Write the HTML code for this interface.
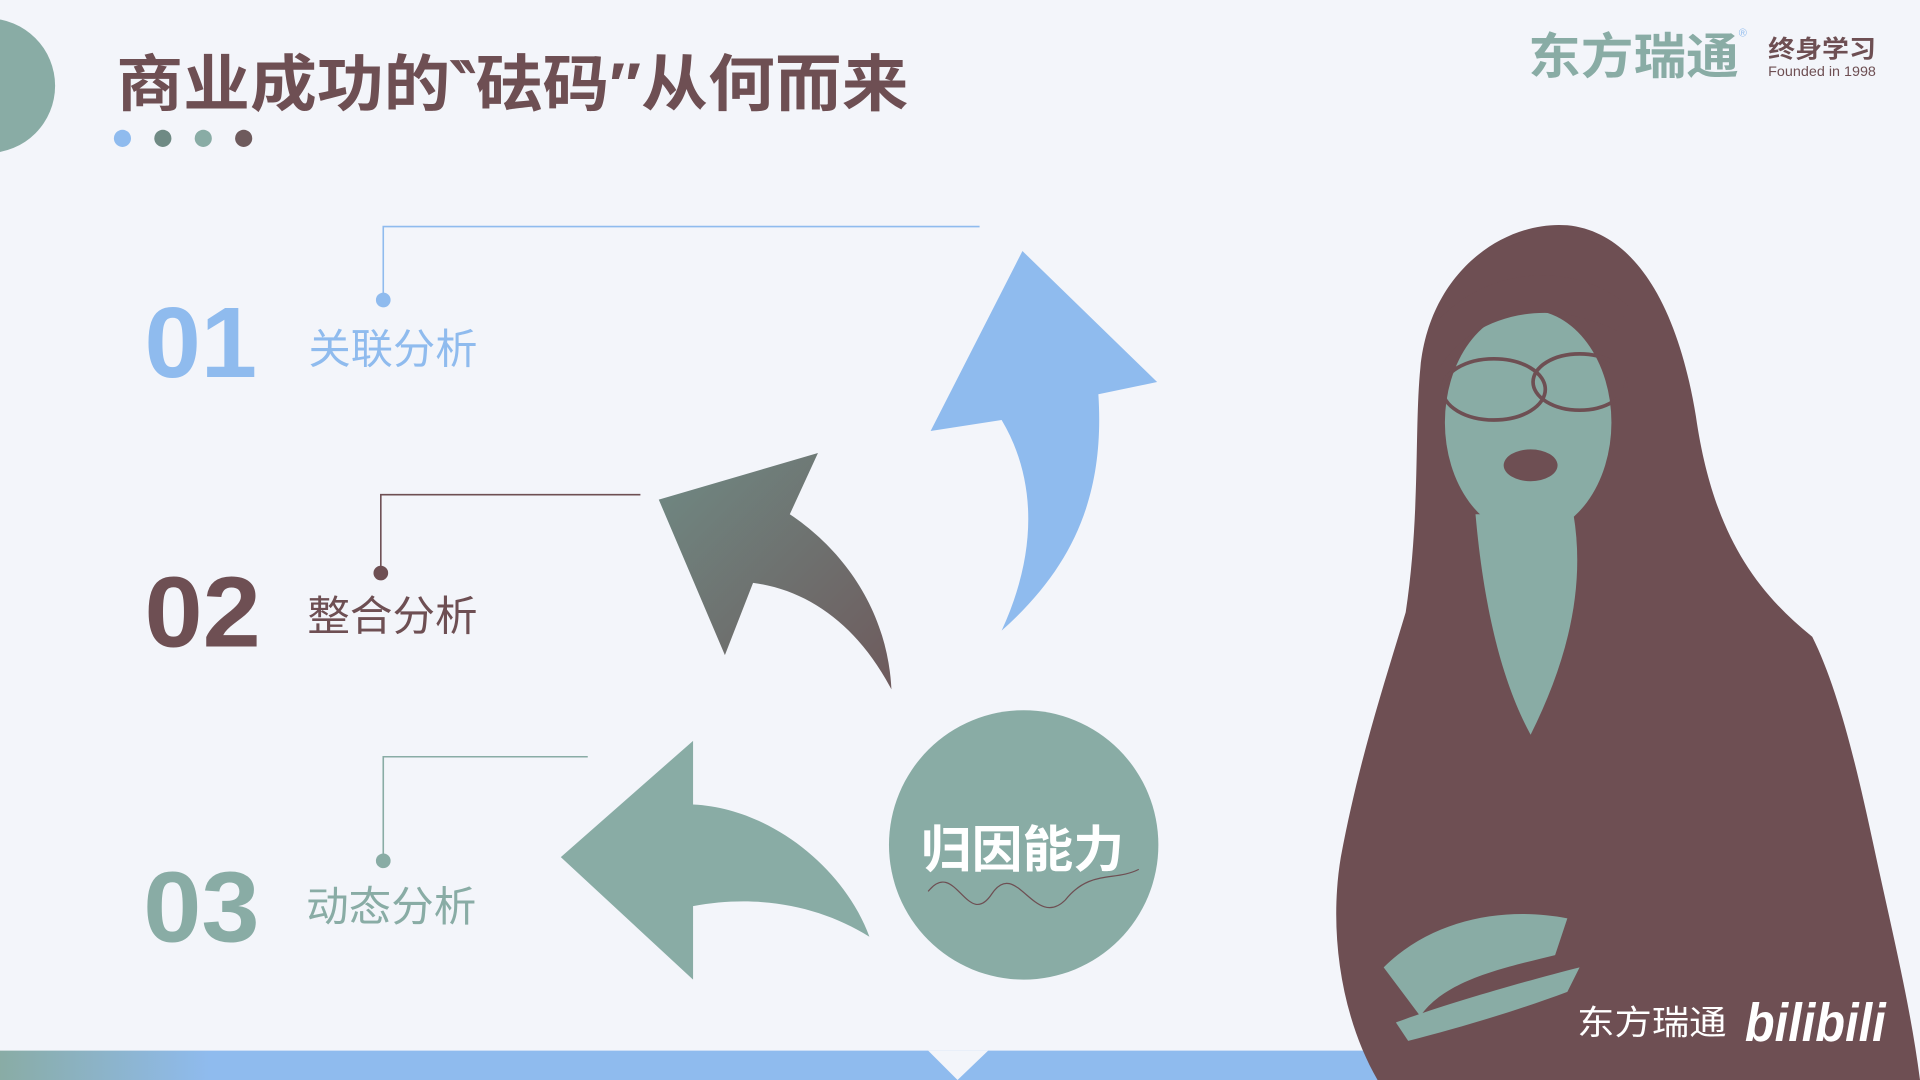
<!DOCTYPE html>
<html><head><meta charset="utf-8"><style>
html,body{margin:0;padding:0;width:1920px;height:1080px;overflow:hidden;background:#f3f5fa}
svg{display:block}
text{font-family:"Liberation Sans","Noto Sans CJK SC",sans-serif}
</style></head><body>
<svg width="1920" height="1080" viewBox="0 0 1568 882" xmlns="http://www.w3.org/2000/svg">
<rect width="1568" height="882" fill="#f3f5fa"/>
<circle cx="-10" cy="70" r="55" fill="#89aca5"/>
<text x="95" y="86" font-size="50" font-weight="bold" fill="#6e4f53" textLength="647" lengthAdjust="spacingAndGlyphs">商业成功的‶砝码″从何而来</text>
<circle cx="100" cy="113" r="7" fill="#8fbbee"/>
<circle cx="133" cy="113" r="7" fill="#6f8a84"/>
<circle cx="166" cy="113" r="7" fill="#89aca5"/>
<circle cx="199" cy="113" r="7" fill="#6e5a5c"/>
<!-- logo -->
<text x="1248" y="60" font-size="40" font-weight="bold" fill="#89aca5" textLength="172" lengthAdjust="spacingAndGlyphs">东方瑞通</text>
<text x="1420" y="30" font-size="9" fill="#8fbbee">®</text>
<text x="1444" y="47" font-size="20" font-weight="bold" fill="#6e4f53" textLength="88" lengthAdjust="spacingAndGlyphs">终身学习</text>
<text x="1444" y="62" font-size="11" fill="#6e4f53" textLength="88" lengthAdjust="spacingAndGlyphs">Founded in 1998</text>
<!-- item lines -->
<polyline points="800,185 313,185 313,245" fill="none" stroke="#8fbbee" stroke-width="1.3"/>
<circle cx="313" cy="245" r="6" fill="#8fbbee"/>
<polyline points="523,404 311,404 311,468" fill="none" stroke="#6e4f53" stroke-width="1.3"/>
<circle cx="311" cy="468" r="6" fill="#6e4f53"/>
<polyline points="480,618 313,618 313,703" fill="none" stroke="#89aca5" stroke-width="1.3"/>
<circle cx="313" cy="703" r="6" fill="#89aca5"/>
<text x="118" y="308" font-size="82" font-weight="bold" fill="#8fbbee" textLength="92" lengthAdjust="spacingAndGlyphs">01</text>
<text x="252" y="297" font-size="34" fill="#8fbbee" textLength="138" lengthAdjust="spacingAndGlyphs">关联分析</text>
<text x="118" y="528" font-size="82" font-weight="bold" fill="#6e4f53" textLength="95" lengthAdjust="spacingAndGlyphs">02</text>
<text x="251" y="515" font-size="34" fill="#6e4f53" textLength="139" lengthAdjust="spacingAndGlyphs">整合分析</text>
<text x="117" y="769" font-size="82" font-weight="bold" fill="#89aca5" textLength="95" lengthAdjust="spacingAndGlyphs">03</text>
<text x="250" y="752" font-size="34" fill="#89aca5" textLength="139" lengthAdjust="spacingAndGlyphs">动态分析</text>
<!-- arrows -->
<path d="M835,205 L945,312 L897,322 C902,400 880,460 818,515 C848,450 846,390 818,343 L760,352 Z" fill="#8fbbee"/>
<defs><linearGradient id="g" x1="0" y1="0" x2="1" y2="1"><stop offset="0" stop-color="#6f8a84"/><stop offset="1" stop-color="#6e5a5c"/></linearGradient></defs>
<path d="M538,408 L668,370 L645,420 C690,450 725,500 728,563 C700,510 660,482 615,476 L592,535 Z" fill="url(#g)"/>
<path d="M458,700 L566,605 L566,657 C630,660 690,710 710,765 C670,740 620,730 566,740 L566,800 Z" fill="#89aca5"/>
<circle cx="836" cy="690" r="110" fill="#89aca5"/>
<text x="752" y="708" font-size="41" font-weight="bold" fill="#fff" textLength="166" lengthAdjust="spacingAndGlyphs">归因能力</text>
<path d="M758,728 C780,700 790,760 810,730 C830,700 845,760 870,735 C890,710 910,720 930,710" fill="none" stroke="#6e4f53" stroke-width="1"/>
<!-- bottom bar -->
<defs><linearGradient id="b" x1="0" x2="1"><stop offset="0" stop-color="#89aca5"/><stop offset="0.15" stop-color="#8fbbee"/></linearGradient></defs>
<rect x="0" y="858" width="1140" height="24" fill="url(#b)"/>
<path d="M758,858 L807,858 L782,882 Z" fill="#f3f5fa"/>
<!-- woman -->
<path d="M1160,300 C1168,220 1230,180 1280,184 C1340,190 1372,260 1385,340 C1398,430 1430,480 1480,520 C1500,560 1515,620 1530,690 C1545,760 1560,820 1568,882 L1125,882 C1095,830 1085,760 1095,700 C1110,620 1130,560 1148,500 C1160,420 1155,350 1160,300 Z" fill="#6e4f53"/>
<ellipse cx="1248" cy="345" rx="68" ry="92" fill="#89aca5"/>
<path d="M1176,300 C1200,260 1260,240 1320,270 L1330,250 C1290,215 1220,215 1176,260 Z" fill="#6e4f53"/>
<path d="M1205,420 L1285,420 C1295,480 1280,540 1250,600 C1228,560 1212,500 1205,420 Z" fill="#89aca5"/>
<ellipse cx="1220" cy="318" rx="42" ry="25" fill="none" stroke="#6e4f53" stroke-width="3"/>
<ellipse cx="1290" cy="312" rx="38" ry="23" fill="none" stroke="#6e4f53" stroke-width="3"/>
<ellipse cx="1250" cy="380" rx="22" ry="13" fill="#6e4f53"/>
<path d="M1130,790 C1170,750 1230,740 1280,750 L1270,780 C1230,790 1180,800 1160,830 Z" fill="#89aca5"/>
<path d="M1140,835 C1180,820 1250,800 1290,790 L1280,810 C1240,825 1190,840 1150,850 Z" fill="#89aca5"/>
<text x="1288" y="845" font-size="28" fill="#fff" textLength="122" lengthAdjust="spacingAndGlyphs">东方瑞通</text>
<text x="1425" y="850" font-size="44" font-weight="bold" font-style="italic" fill="#fff" textLength="115" lengthAdjust="spacingAndGlyphs">bilibili</text>
</svg>
</body></html>
